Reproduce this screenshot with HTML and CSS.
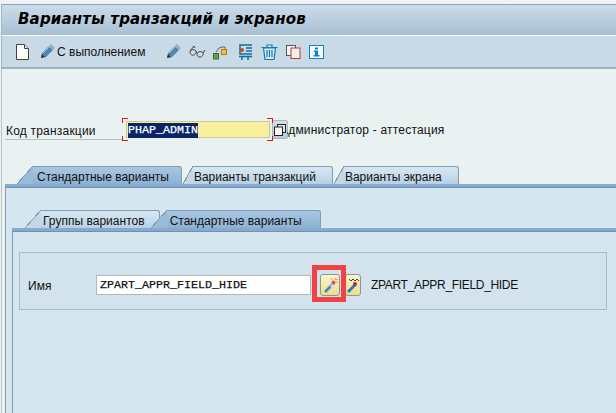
FILE: index.html
```html
<!DOCTYPE html>
<html lang="ru">
<head>
<meta charset="utf-8">
<title>Варианты транзакций и экранов</title>
<link rel="stylesheet" href="styles.css">
</head>
<body>
<div class="window">
  <header class="titlebar"><h1>Варианты транзакций и экранов</h1></header>
  <div class="toolbar">
    <svg class="ic doc" width="13" height="16" viewBox="0 0 13 16"><path d="M.5.5h8l4 4v11H.5z" fill="#fbfdf8" stroke="#444"/><path d="M8.5.5v4h4" fill="#dfe6e0" stroke="#444"/></svg>
    <span class="tool-text">
      <svg width="15" height="15" viewBox="0 0 15 15"><path d="M1 14l1-5 7-7 4 4-7 7z" fill="#4f86b0"/><path d="M9 2l2-2 4 4-2 2z" fill="#8fb4cf"/><path d="M1 14l1-4 3 3z" fill="#26384a"/><path d="M3 9l7-7" stroke="#a9cbe2"/></svg>
      С выполнением
    </span>
    <svg class="ic pen" width="15" height="15" viewBox="0 0 15 15"><path d="M1 14l1-5 7-7 4 4-7 7z" fill="#4f86b0"/><path d="M9 2l2-2 4 4-2 2z" fill="#8fb4cf"/><path d="M1 14l1-4 3 3z" fill="#26384a"/><path d="M3 9l7-7" stroke="#a9cbe2"/></svg>
    <svg class="ic glasses" width="17" height="13" viewBox="0 0 17 13" fill="none" stroke="#444"><path d="M1 7C2 4 6 4 7 6S5 11 3 10 1 8 1 7zM8 9c1-3 5-3 6-1s-2 5-4 4-2-2-2-3zM7 6l1 2M1 6l4-5 1 2M14 8l2-3"/></svg>
    <svg class="ic transport" width="14" height="17" viewBox="0 0 14 17"><rect x=".5" y="10.500" width="5" height="5.500" fill="#58a83c" stroke="#3a6a30"/><rect x="8.500" y="6.500" width="5" height="5" fill="#f6c030" stroke="#b5772a"/><path d="M3 9l3-4 3-1h3v2" fill="none" stroke="#666"/></svg>
    <svg class="ic clamp" width="15" height="16" viewBox="0 0 15 16" fill="none" stroke="#0f6f9e" stroke-width="1.500"><path d="M14 1H2v9h12M1 12.500h13M4 13v3M10 13v3M8 4h6M8 7h6"/><circle cx="4" cy="6" r="2" fill="#c84a22" stroke="none"/></svg>
    <svg class="ic trash" width="17" height="16" viewBox="0 0 17 16" fill="#d8e8f0" stroke="#147ab0" stroke-width="1.200"><path d="M.500 3.500h16M6 3V1h5v2"/><path d="M2.500 4l1.500 11.500h9L14.500 4z"/><path d="M6 6v7M8.500 6v7M11 6v7"/></svg>
    <svg class="ic copy" width="15" height="14" viewBox="0 0 15 14"><rect x=".5" y=".5" width="9" height="10" fill="#f4f6f2" stroke="#555"/><rect x="5" y="3" width="9" height="10.500" fill="#f2f2ea" stroke="#b5402a"/></svg>
    <svg class="ic info" width="15" height="14" viewBox="0 0 15 14"><rect x=".5" y=".5" width="14" height="13" fill="#f4fafc" stroke="#0f82c2"/><path d="M6 2.500h3v2H6zM5 5.500h4V10h1.500v1.500h-6V10H6V7H5z" fill="#0f82c2"/></svg>
  </div>
  <main class="content">
    <div class="tcode-row">
      <label class="tcode-label">Код транзакции</label>
      <div class="tcode-input"><span class="selected">PHAP_ADMIN</span><i class="req tl"></i><i class="req tr"></i><i class="req bl"></i><i class="req br"></i></div>
      <button class="f4" type="button"><svg width="12" height="12" viewBox="0 0 12 12"><rect x="3.500" y=".5" width="8" height="8" fill="#dfe8ee" stroke="#222"/><rect x=".5" y="3" width="8" height="8.500" fill="#f8f8f0" stroke="#222"/></svg></button>
      <span class="desc">Администратор - аттестация</span>
    </div>

    <div class="tabs outer">
      <span class="tab active wide t-std">Стандартные варианты</span>
      <span class="tab">Варианты транзакций</span>
      <span class="tab">Варианты экрана</span>
    </div>
    <section class="panel">
      <div class="tabs inner">
        <span class="tab wide t-grp">Группы вариантов</span>
        <span class="tab active wide t-std2">Стандартные варианты</span>
      </div>
      <div class="subpanel">
        <div class="group">
          <span class="name-label">Имя</span>
          <div class="name-input">ZPART_APPR_FIELD_HIDE</div>
          <div class="buttons">
            <button class="wand on" type="button"><svg width="17" height="17" viewBox="0 0 17 17"><path d="M2 15l9-9 2 2-9 9z" fill="#3f8cc4" transform="translate(0 -1)"/><path d="M8 9l3-3 2 2-3 3z" fill="#c8d8e0"/><circle cx="11.500" cy="5.500" r="2" fill="#d8506a"/><path d="M14 1l-1 2M16 5h-2M9 1l1 2M16 2l-2 1" stroke="#e89060"/></svg></button>
            <button class="wand second" type="button"><svg width="13" height="15" viewBox="0 0 13 15"><path d="M0 13l7-7 2 2-7 7z" fill="#1f7fc0"/><circle cx="8" cy="6" r="2" fill="#b82840"/><path d="M2 1l2 2 2-2 2 2 2-2 2 2" fill="none" stroke="#444"/></svg></button>
          </div>
          <span class="name-desc">ZPART_APPR_FIELD_HIDE</span>
        </div>
      </div>
    </section>
  </main>
</div>
</body>
</html>
```
FILE: styles.css
```css
* { box-sizing: border-box; }
html, body { margin: 0; height: 100%; overflow: hidden; }
body {
  font: 12px/14px "Liberation Sans", Arial, sans-serif;
  color: #111;
  background: #e9f1f1;
}
.window {
  height: 413px;
  padding-top: 4px;
  display: flex;
  flex-direction: column;
  background: linear-gradient(#eef2f6 0 4px, #e9f1f1 4px);
}
.titlebar {
  height: 32px;
  margin-left: 1px;
  padding: 5px 0 0 16px;
  border-top: 1px solid #8fa3b6;
  border-left: 1px solid #a9b9c4;
  border-bottom: 1px solid #f2f7fa;
  background: linear-gradient(#cbdcea, #a8c0d3);
}
.titlebar h1 {
  margin: 0;
  font: italic bold 15px/18px "DejaVu Sans", sans-serif;
  letter-spacing: .17px;
  color: #000;
  white-space: nowrap;
}
.toolbar {
  height: 33px;
  margin-left: 1px;
  padding-left: 14px;
  display: flex;
  align-items: center;
  border-left: 1px solid #a9b9c4;
  border-bottom: 2px solid #9fb3bf;
  background: #c7dae6;
}
.tool-text { display: flex; align-items: center; gap: 2px; margin-left: 11px; margin-right: 21px; }
.ic { flex: none; }
.glasses { margin-left: 8px; }
.transport { margin-left: 7px; }
.clamp { margin-left: 11px; }
.trash { margin-left: 8px; }
.copy { margin-left: 8px; }
.info { margin-left: 8px; }

.content {
  flex: 1;
  margin-left: 1px;
  border-left: 1px solid #b9c4c8;
  display: flex;
  flex-direction: column;
  min-height: 0;
}
.tcode-row {
  margin-top: 52px;
  display: flex;
  align-items: center;
  height: 18px;
}
.tcode-label {
  width: 117px;
  margin-left: 3px;
  height: 19px;
  padding: 3px 0 0 1px;
  letter-spacing: .2px;
  border-bottom: 1px solid #b4bec2;
  align-self: flex-start;
  white-space: nowrap;
}
.tcode-input {
  position: relative;
  width: 144px;
  height: 17px;
  margin-left: 4px;
  padding: 1px 0 0 1px;
  background: #f8f09c;
  border: 1px solid #c9c7a0;
  font: 11.670px/14px "Liberation Mono", monospace;
  -webkit-text-stroke: .25px;
  align-self: flex-start;
}
.selected { background: #0a2468; color: #fff; display: inline-block; height: 15px; }
.req { position: absolute; width: 6px; height: 5px; border: 0 solid #e01818; }
.req.tl { left: -5px; top: -4px; border-width: 1px 0 0 1px; }
.req.tr { right: -4px; top: -4px; border-width: 1px 1px 0 0; }
.req.bl { left: -5px; bottom: -4px; border-width: 0 0 1px 1px; }
.req.br { right: -4px; bottom: -4px; border-width: 0 1px 1px 0; }
.f4 {
  width: 16px;
  height: 19px;
  padding: 0;
  margin-left: 2px;
  margin-top: -1px;
  display: flex;
  align-items: center;
  justify-content: center;
  border: 1px solid #a8b8c6;
  border-radius: 2px;
  background: linear-gradient(#d4e0ea, #b8cad8);
}
.desc { white-space: nowrap; clip-path: inset(0 0 0 7px); margin-left: -8px; letter-spacing: .2px; }

.tabs { display: flex; height: 18px; }
.outer { margin-top: 27px; padding-left: 31px; }
.tab {
  position: relative;
  height: 18px;
  padding: 3px 16px 0 1px;
  margin-right: 11px;
  background: linear-gradient(#d8e8f2, #b8d0e4);
  border: 1px solid #7f9db8;
  border-left: 0;
  border-bottom: 0;
  border-radius: 0 3px 0 0;
  white-space: nowrap;
}
.tab::before {
  content: "";
  position: absolute;
  left: -10px;
  top: -1px;
  width: 10px;
  height: 18px;
  background:
    linear-gradient(to bottom right, transparent calc(50% - .5px), #7f9db8 calc(50% - .5px), #7f9db8 calc(50% + .5px), transparent calc(50% + .5px)),
    linear-gradient(to bottom right, transparent 50%, #c4d9e8 50%);
}
.tab.wide::before { left: -16px; width: 16px; }
.tab.active {
  background: linear-gradient(#a8c6e0, #8db2d4);
  z-index: 1;
}
.tab.active::before {
  background:
    linear-gradient(to bottom right, transparent calc(50% - .5px), #7f9db8 calc(50% - .5px), #7f9db8 calc(50% + .5px), transparent calc(50% + .5px)),
    linear-gradient(to bottom right, transparent 50%, #98bbd9 50%);
}
.t-std { padding: 3px 12px 0 4px; }
.t-grp { padding: 3px 14px 0 2px; margin-right: 7px; letter-spacing: .02px; }
.t-std2 { padding: 3px 18px 0 3px; }
.panel {
  flex: 1;
  margin-left: 3px;
  padding-top: 23px;
  display: flex;
  flex-direction: column;
  background: #d6e6ef;
  border-left: 1px solid #7f9db8;
  border-top: 3px solid #85abd0;
  box-shadow: inset 0 1px 0 #6f92b4;
  min-height: 0;
}
.inner { padding-left: 35px; }
.subpanel {
  flex: 1;
  margin-left: 6px;
  padding: 21px 9px 0 6px;
  border-left: 1px solid #7f9db8;
  border-top: 3px solid #85abd0;
  box-shadow: inset 0 1px 0 #6f92b4;
}
.group {
  height: 58px;
  padding-top: 22px;
  display: flex;
  align-items: flex-start;
  border: 1px solid #a5bccc;
  background: #d2e3ee;
}
.name-label { width: 76px; padding: 4px 0 0 8px; }
.name-input {
  width: 215px;
  height: 20px;
  padding: 3px 0 0 3px;
  background: #fff;
  border: 1px solid #b4b8b8;
  font: 11.670px/12px "Liberation Mono", monospace;
  -webkit-text-stroke: .25px;
}
.buttons { position: relative; display: flex; margin: -1px 0 0 9px; }
.wand {
  width: 20px;
  height: 22px;
  padding: 0;
  display: flex;
  align-items: center;
  justify-content: center;
  background: linear-gradient(#fbf6d0, #f0dc88);
  border: 1px solid #8c9498;
  border-radius: 3px;
}
.wand.on { position: relative; z-index: 1; }
.wand.on::after {
  content: "";
  position: absolute;
  left: -9px;
  right: -7px;
  top: -10px;
  bottom: -7px;
  border: 5px solid #ee4444;
}
.second { width: 16px; margin-left: 5px; }
.name-desc { margin: 3px 0 0 10px; white-space: nowrap; letter-spacing: -.32px; }
```
